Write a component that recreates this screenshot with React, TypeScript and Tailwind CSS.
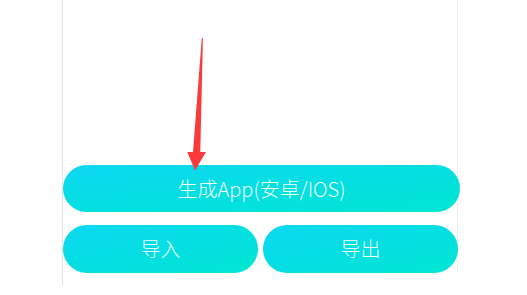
import React from "react";

export default function App() {
  const font = { fontFamily: '"Noto Sans CJK SC", "Noto Sans", sans-serif' };
  const btn =
    "flex items-center justify-center rounded-full bg-gradient-to-br from-[#0dd7f1] to-[#02e6d2] text-[20px] font-light text-[#effffb]";
  return (
    <div className="relative h-[295px] w-[527px] bg-white" style={font}>
      <div className="ml-[62px] h-[285px] w-[396px] border-l border-[#e3e3e3]">
        <div className="flex h-[273px] w-[395px] flex-col border-r border-[#efefef] pt-[165px]">
          <div className={`${btn} h-[47px] w-[397px] shrink-0`}>生成App(安卓/IOS)</div>
          <div className="mt-[13px] flex h-[48px] w-[395px] gap-[5px]">
            <div className={`${btn} h-[48px] w-[195px]`}>导入</div>
            <div className={`${btn} h-[48px] w-[195px]`}>导出</div>
          </div>
        </div>
      </div>
      <svg
        className="absolute left-0 top-0"
        width="527"
        height="295"
        viewBox="0 0 527 295"
      >
        <polygon
          points="201.8,38 202.9,38 200.3,152 206,152 195,170.5 187.3,152 193,152"
          fill="#fc3a3b"
        />
      </svg>
    </div>
  );
}
